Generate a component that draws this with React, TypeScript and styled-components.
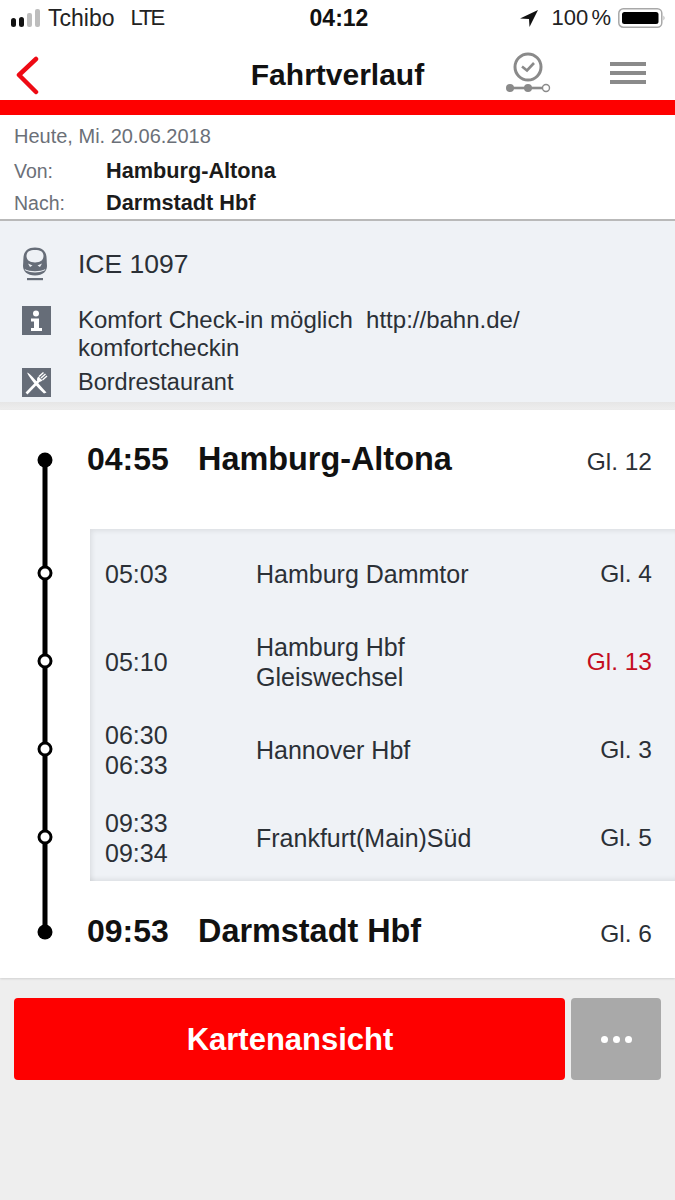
import React from 'react';
import styled, { createGlobalStyle } from 'styled-components';

const GlobalStyle = createGlobalStyle`
  html, body { margin: 0; padding: 0; background: #eeeeee; }
  body { font-family: "Liberation Sans", Arial, sans-serif; color: #2b3036; }
`;

const stops = [
  { times: ['05:03'], name: ['Hamburg Dammtor'], track: 'Gl. 4' },
  { times: ['05:10'], name: ['Hamburg Hbf', 'Gleiswechsel'], track: 'Gl. 13', changed: true },
  { times: ['06:30', '06:33'], name: ['Hannover Hbf'], track: 'Gl. 3' },
  { times: ['09:33', '09:34'], name: ['Frankfurt(Main)Süd'], track: 'Gl. 5' },
];

function Signal() {
  return (
    <svg width="29" height="18" viewBox="0 0 29 18">
      <rect x="0" y="9" width="5" height="9" rx="2.5" fill="#111" />
      <rect x="8" y="8" width="5" height="10" rx="2.5" fill="#111" />
      <rect x="16" y="4" width="5" height="14" rx="2" fill="#bdbdbd" />
      <rect x="24" y="0" width="5" height="18" rx="2" fill="#bdbdbd" />
    </svg>
  );
}

function LocationArrow() {
  return (
    <svg width="18" height="17" viewBox="0 0 18 17">
      <path d="M18 0 L0 8.5 L9 9 L9.5 17 Z" fill="#111" />
    </svg>
  );
}

function Battery() {
  return (
    <svg width="47" height="20" viewBox="0 0 47 20">
      <rect x="0.8" y="0.8" width="43" height="18.4" rx="4.5" fill="none" stroke="#a8a8a8" strokeWidth="1.5" />
      <rect x="4" y="4" width="36.5" height="12" rx="2.5" fill="#000" />
      <path d="M45.5 7.5 q2 2.5 0 5 Z" fill="#a8a8a8" />
    </svg>
  );
}

function BackIcon() {
  return (
    <svg width="26" height="40" viewBox="0 0 26 40">
      <path d="M22 4 L5 20 L22 37" fill="none" stroke="#ee0a14" strokeWidth="4.5" strokeLinecap="round" strokeLinejoin="round" />
    </svg>
  );
}

function TimelineIcon() {
  return (
    <svg width="46" height="42" viewBox="0 0 46 42">
      <circle cx="23" cy="15" r="13" fill="none" stroke="#8a8a8a" strokeWidth="3" />
      <path d="M17 14.5 L22 18.5 L29 11" fill="none" stroke="#8a8a8a" strokeWidth="2.6" />
      <path d="M5 36 H37" stroke="#8a8a8a" strokeWidth="2.6" />
      <circle cx="5" cy="36" r="4" fill="#8a8a8a" />
      <circle cx="23" cy="36" r="4" fill="#8a8a8a" />
      <circle cx="41" cy="36" r="3.5" fill="#fff" stroke="#8a8a8a" strokeWidth="1.4" />
    </svg>
  );
}

function TrainIcon() {
  return (
    <svg width="26" height="34" viewBox="0 0 26 34">
      <path d="M13 0.5 C20 0.5 24 4 24.5 10 L25 19 C25 24 21 28.5 13 28.5 C5 28.5 1 24 1 19 L1.5 10 C2 4 6 0.5 13 0.5 Z" fill="#666d78" />
      <path d="M13 3 C18 3 21.5 4.5 21.5 9 C21.5 12.5 19 14.5 16.5 15 C14 15.5 12 15.5 9.5 15 C7 14.5 4.5 12.5 4.5 9 C4.5 4.5 8 3 13 3 Z" fill="#eef1f5" />
      <path d="M6 16.5 L10.5 18.5 L8 20 Z M20 16.5 L15.5 18.5 L18 20 Z" fill="#eef1f5" />
      <path d="M2.5 22 C8 25 18 25 23.5 22 L22.5 23.5 C17 26 9 26 3.5 23.5 Z" fill="#eef1f5" />
      <rect x="5" y="31" width="16" height="2.2" fill="#666d78" />
    </svg>
  );
}

function InfoIcon() {
  return (
    <svg width="29" height="29" viewBox="0 0 29 29">
      <rect width="29" height="29" fill="#666d78" />
      <circle cx="14" cy="7.5" r="3" fill="#fff" />
      <path d="M9 12.5 H17 V22 H20 V25 H9 V22 H12 V15.5 H9 Z" fill="#fff" />
    </svg>
  );
}

function RestaurantIcon() {
  return (
    <svg width="29" height="29" viewBox="0 0 29 29">
      <rect width="29" height="29" fill="#666d78" />
      <path d="M5 4.5 C9 6 15 14 24.5 24.5 L22 25.5 C15 19 8 11 5 4.5 Z" fill="#fff" />
      <path d="M4.5 25.5 L18 11.5" stroke="#fff" strokeWidth="2.6" />
      <path d="M17 8.5 L21.5 4.5 M19 10 L23.5 6 M20.5 12 L25 8" stroke="#fff" strokeWidth="1.4" />
      <path d="M16.5 8.5 L20.5 12.5 C19 14 17 14 15.5 12.5 C14.5 11.5 15 10 16.5 8.5 Z" fill="#fff" />
    </svg>
  );
}

function Rail() {
  const open = [163, 251, 339, 427];
  return (
    <svg width="90" height="568" viewBox="0 0 90 568">
      <path d="M45 50 V522" stroke="#000" strokeWidth="5" />
      <circle cx="45" cy="50" r="7.5" fill="#000" />
      {open.map((y) => (
        <circle key={y} cx="45" cy={y} r="6" fill="#fff" stroke="#000" strokeWidth="3" />
      ))}
      <circle cx="45" cy="522" r="7.5" fill="#000" />
    </svg>
  );
}

export default function App() {
  return (
    <Screen>
      <GlobalStyle />
      <StatusBar>
        <StatusSide>
          <Signal />
          <Carrier>Tchibo</Carrier>
          <Network>LTE</Network>
        </StatusSide>
        <Clock>04:12</Clock>
        <StatusRight>
          <ArrowSlot><LocationArrow /></ArrowSlot>
          <Percent>100 %</Percent>
          <Battery />
        </StatusRight>
      </StatusBar>

      <NavBar>
        <BackButton><BackIcon /></BackButton>
        <NavTitle>Fahrtverlauf</NavTitle>
        <NavIcons>
          <TimelineSlot><TimelineIcon /></TimelineSlot>
          <MenuIcon><i /><i /><i /></MenuIcon>
        </NavIcons>
      </NavBar>
      <RedBar />

      <TripInfo>
        <TripDate>Heute, Mi. 20.06.2018</TripDate>
        <TripRow><TripLabel>Von:</TripLabel><TripValue>Hamburg-Altona</TripValue></TripRow>
        <TripRow><TripLabel>Nach:</TripLabel><TripValue>Darmstadt Hbf</TripValue></TripRow>
      </TripInfo>

      <TrainPanel>
        <TrainRow $height={66}><IconSlot><TrainIcon /></IconSlot><TrainName>ICE 1097</TrainName></TrainRow>
        <NoteRow>
          <IconSlot><InfoIcon /></IconSlot>
          <TrainText>Komfort Check-in möglich&nbsp; http://bahn.de/<br />komfortcheckin</TrainText>
        </NoteRow>
        <TrainRow $height={29}><IconSlot><RestaurantIcon /></IconSlot><ServiceText>Bordrestaurant</ServiceText></TrainRow>
      </TrainPanel>

      <RouteCard>
        <Rail />
        <RouteBody>
          <EndStop $height={119} $pad={29}>
            <EndTime>04:55</EndTime>
            <EndName>Hamburg-Altona</EndName>
            <EndTrack>Gl. 12</EndTrack>
          </EndStop>
          <ViaPanel>
            {stops.map((s) => (
              <ViaRow key={s.track}>
                <ViaTime>{s.times.map((t) => <div key={t}>{t}</div>)}</ViaTime>
                <ViaName>{s.name.map((n) => <div key={n}>{n}</div>)}</ViaName>
                <Track $changed={s.changed}>{s.track}</Track>
              </ViaRow>
            ))}
          </ViaPanel>
          <EndStop $height={97} $pad={30}>
            <EndTime>09:53</EndTime>
            <EndName>Darmstadt Hbf</EndName>
            <EndTrack>Gl. 6</EndTrack>
          </EndStop>
        </RouteBody>
      </RouteCard>

      <Actions>
        <MapButton>Kartenansicht</MapButton>
        <MoreButton><i /><i /><i /></MoreButton>
      </Actions>
    </Screen>
  );
}

const Screen = styled.div`
  width: 675px;
  height: 1200px;
  overflow: hidden;
  background: #eeeeee;
  display: flex;
  flex-direction: column;
`;

const StatusBar = styled.div`
  height: 40px;
  background: #fff;
  padding: 0 10px 4px 11px;
  box-sizing: border-box;
  display: grid;
  grid-template-columns: 1fr auto 1fr;
  align-items: center;
`;

const StatusSide = styled.div`
  display: flex;
  align-items: center;
  gap: 8px;
`;

const StatusRight = styled(StatusSide)`
  justify-content: flex-end;
  gap: 7px;
`;

const ArrowSlot = styled.span`
  display: flex;
  margin-right: 7px;
`;

const Carrier = styled.span`
  font-size: 23px;
  color: #222;
  margin-right: 8px;
`;

const Network = styled.span`
  font-size: 22px;
  letter-spacing: -2px;
  color: #222;
`;

const Percent = styled.span`
  font-size: 22px;
  word-spacing: -3px;
  color: #222;
`;

const Clock = styled.span`
  font-size: 23px;
  font-weight: 700;
  color: #111;
  margin-left: 2px;
`;

const NavBar = styled.div`
  height: 60px;
  box-sizing: border-box;
  background: #fff;
  padding: 10px 14px 0;
  display: grid;
  grid-template-columns: 1fr auto 1fr;
  align-items: center;
`;

const BackButton = styled.div`
  display: flex;
  align-items: center;
`;

const NavTitle = styled.div`
  font-size: 30px;
  font-weight: 700;
  color: #111;
`;

const NavIcons = styled.div`
  display: flex;
  justify-content: flex-end;
  align-items: center;
  gap: 59px;
  padding-right: 15px;
`;

const TimelineSlot = styled.div`
  display: flex;
  margin-bottom: 4px;
`;

const MenuIcon = styled.div`
  width: 36px;
  margin-bottom: 4px;
  display: flex;
  flex-direction: column;
  gap: 5px;
  i { display: block; height: 4px; background: #8a8a8a; }
`;

const RedBar = styled.div`
  height: 15px;
  background: #fe0000;
`;

const TripInfo = styled.div`
  height: 106px;
  box-sizing: border-box;
  padding: 10px 14px 0;
  background: #fff;
  border-bottom: 2px solid #b9b9b9;
`;

const TripDate = styled.div`
  font-size: 20px;
  line-height: 22px;
  color: #6b7078;
  margin-bottom: 8px;
`;

const TripRow = styled.div`
  display: flex;
  height: 32px;
  align-items: center;
`;

const TripLabel = styled.div`
  width: 92px;
  font-size: 19.5px;
  color: #6b7078;
`;

const TripValue = styled.div`
  font-size: 21.7px;
  font-weight: 700;
  color: #1b1b1b;
`;

const TrainPanel = styled.div`
  height: 189px;
  box-sizing: border-box;
  padding-top: 10px;
  background: linear-gradient(#eff2f6 0, #eff2f6 181px, #e6e6e6 181px, #eeeeee 189px);
`;

const TrainRow = styled.div<{ $height: number }>`
  height: ${(p) => p.$height}px;
  display: flex;
  align-items: center;
`;

const NoteRow = styled.div`
  height: 71px;
  box-sizing: border-box;
  padding-top: 9px;
  display: flex;
  align-items: flex-start;
`;

const IconSlot = styled.div`
  width: 78px;
  padding-left: 22px;
  box-sizing: border-box;
  display: flex;
`;

const TrainName = styled.div`
  font-size: 26.5px;
  color: #2b3036;
`;

const TrainText = styled.div`
  font-size: 24px;
  line-height: 28px;
  color: #2b3036;
`;

const ServiceText = styled.div`
  font-size: 23.5px;
  line-height: 29px;
  color: #2b3036;
`;

const RouteCard = styled.div`
  height: 568px;
  display: flex;
  background: #fff;
  box-shadow: 0 1px 2px rgba(0, 0, 0, 0.12);
`;

const RouteBody = styled.div`
  flex: 1;
  display: flex;
  flex-direction: column;
`;

const EndStop = styled.div<{ $height: number; $pad: number }>`
  height: ${(p) => p.$height}px;
  box-sizing: border-box;
  padding: ${(p) => p.$pad}px 23px 0 0;
  display: flex;
  align-items: flex-start;
  line-height: 40px;
`;

const EndTime = styled.div`
  width: 111px;
  margin-left: -3px;
  font-size: 32px;
  font-weight: 700;
  color: #111;
`;

const EndName = styled.div`
  flex: 1;
  font-size: 32.4px;
  font-weight: 700;
  color: #111;
`;

const Track = styled.div<{ $changed?: boolean }>`
  font-size: 24.5px;
  line-height: 40px;
  color: ${(p) => (p.$changed ? '#c40d1e' : '#2b3036')};
`;

const EndTrack = styled(Track)`
  margin-top: 3px;
`;

const ViaPanel = styled.div`
  height: 352px;
  background: #eff2f6;
  box-shadow: inset 5px 5px 5px -3px rgba(0, 0, 0, 0.08), inset 0 -5px 5px -3px rgba(0, 0, 0, 0.08);
`;

const ViaRow = styled.div`
  height: 88px;
  box-sizing: border-box;
  padding: 2px 23px 0 15px;
  display: flex;
  align-items: center;
  font-size: 25px;
  line-height: 30px;
  color: #2b3036;
`;

const ViaTime = styled.div`
  width: 151px;
`;

const ViaName = styled.div`
  flex: 1;
`;

const Actions = styled.div`
  padding: 20px 14px 0;
  display: flex;
  gap: 6px;
`;

const MapButton = styled.div`
  width: 551px;
  height: 82px;
  box-sizing: border-box;
  padding: 1px 0 0 1px;
  border-radius: 4px;
  background: #fe0000;
  color: #fff;
  font-size: 31px;
  font-weight: 700;
  display: flex;
  align-items: center;
  justify-content: center;
`;

const MoreButton = styled.div`
  width: 90px;
  height: 82px;
  border-radius: 4px;
  background: #a9a9a9;
  display: flex;
  align-items: center;
  justify-content: center;
  gap: 5px;
  i { width: 7px; height: 7px; border-radius: 50%; background: #fff; }
`;
